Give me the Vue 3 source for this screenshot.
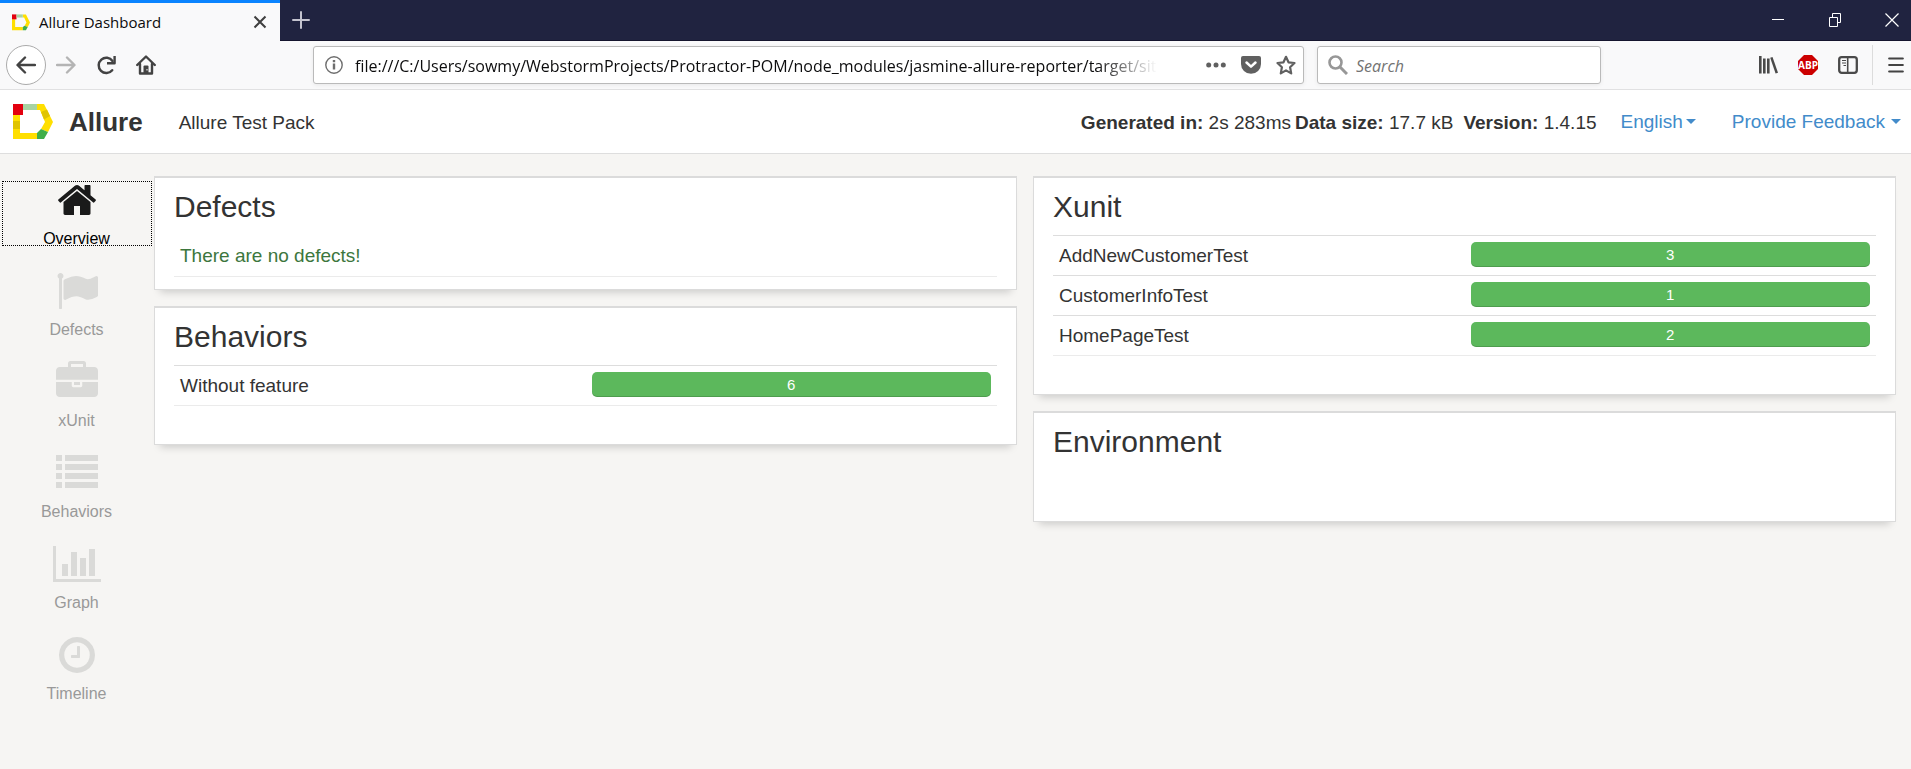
<script setup>
import { ref } from 'vue'

const url = ref('file:///C:/Users/sowmy/WebstormProjects/Protractor-POM/node_modules/jasmine-allure-reporter/target/site')
const query = ref('')

const navItems = [
  {
    label: 'Overview', active: true, width: 1792,
    path: 'M1472 992v480q0 26-19 45t-45 19h-384v-384h-256v384h-384q-26 0-45-19t-19-45v-480q0-1 .5-3t.5-3l575-474 575 474q1 2 1 6zm223-69l-62 74q-8 9-21 11h-3q-13 0-21-7l-692-577-692 577q-12 8-24 7-13-2-21-11l-62-74q-8-10-7-23.5t11-21.5l719-599q32-26 76-26t76 26l244 204v-195q0-14 9-23t23-9h192q14 0 23 9t9 23v408l219 182q10 8 11 21.5t-7 23.5z'
  },
  {
    label: 'Defects', width: 1792,
    path: 'M320 256q0 72-64 110v1266q0 13-9.5 22.5t-22.5 9.5h-64q-13 0-22.5-9.5t-9.5-22.5v-1266q-64-38-64-110 0-53 37.5-90.5t90.5-37.5 90.5 37.5 37.5 90.5zm1472 64v763q0 25-12.5 38.5t-39.5 27.5q-215 116-369 116-61 0-123.5-22t-108.5-48-115.5-48-142.5-22q-192 0-464 146-17 9-33 9-26 0-45-19t-19-45v-742q0-32 31-55 21-14 79-43 236-120 421-120 107 0 200 29t219 88q38 19 88 19 54 0 117.5-21t110-47 88-47 54.5-21q26 0 45 19t19 45z'
  },
  {
    label: 'xUnit', width: 1792,
    path: 'M640 256h512v-128h-512v128zm1152 640v480q0 66-47 113t-113 47h-1472q-66 0-113-47t-47-113v-480h672v160q0 26 19 45t45 19h320q26 0 45-19t19-45v-160h672zm-768 0v128h-256v-128h256zm768-480v384h-1792v-384q0-66 47-113t113-47h352v-160q0-40 28-68t68-28h576q40 0 68 28t28 68v160h352q66 0 113 47t47 113z'
  },
  {
    label: 'Behaviors', width: 1792,
    path: 'M0 128h256v256h-256zM384 128h1408v256h-1408zM0 512h256v256h-256zM384 512h1408v256h-1408zM0 896h256v256h-256zM384 896h1408v256h-1408zM0 1280h256v256h-256zM384 1280h1408v256h-1408z'
  },
  {
    label: 'Graph', width: 2048,
    path: 'M640 896v512h-256v-512h256zm384-512v1024h-256v-1024h256zm1024 1152v128h-2048v-1536h128v1408h1920zm-640-896v768h-256v-768h256zm384-384v1152h-256v-1152h256z'
  },
  {
    label: 'Timeline', width: 1792,
    path: 'M1024 544v448q0 14-9 23t-23 9h-320q-14 0-23-9t-9-23v-64q0-14 9-23t23-9h224v-352q0-14 9-23t23-9h64q14 0 23 9t9 23zm416 352q0-148-73-273t-198-198-273-73-273 73-198 198-73 273 73 273 198 198 273 73 273-73 198-198 73-273zm224 0q0 209-103 385.5t-279.5 279.5-385.5 103-385.5-103-279.5-279.5-103-385.5 103-385.5 279.5-279.5 385.5-103 385.5 103 279.5 279.5 103 385.5z'
  }
]

const columns = [
  [
    { title: 'Defects', message: 'There are no defects!' },
    { title: 'Behaviors', rows: [{ name: 'Without feature', passed: 6 }] }
  ],
  [
    {
      title: 'Xunit',
      rows: [
        { name: 'AddNewCustomerTest', passed: 3 },
        { name: 'CustomerInfoTest', passed: 1 },
        { name: 'HomePageTest', passed: 2 }
      ]
    },
    { title: 'Environment', empty: true }
  ]
]
</script>

<template>
  <div class="window">
    <div class="titlebar">
      <div class="tab">
        <svg class="favicon" viewBox="0 0 40 36" aria-hidden="true">
          <path d="M24 0H31L40 18L35 28L28 25L32 18L27 7H24z" fill="#ffdf00" />
          <path d="M0 11H7V28H24V35H0z" fill="#ffdf00" />
          <path d="M0 0H10V11H0z" fill="#e3000f" />
          <path d="M10 0H24V7H10z" fill="#a8d3a2" />
          <path d="M24 28L28 25L35 28L31 35H24z" fill="#3fae49" />
        </svg>
        <span class="tab-title">Allure Dashboard</span>
        <button class="icon-btn" aria-label="Close tab">
          <svg width="14" height="14" viewBox="0 0 14 14" fill="none" stroke="#3f3f3f" stroke-width="2"><path d="M1.5 1.5l11 11M12.500 1.500l-11 11" /></svg>
        </button>
      </div>
      <button class="icon-btn new-tab" aria-label="New tab">
        <svg width="18" height="18" viewBox="0 0 18 18" fill="none" stroke="#c4c4cf" stroke-width="2" stroke-linecap="round"><path d="M9 1v16M1 9h16" /></svg>
      </button>
      <div class="window-controls">
        <button class="icon-btn" aria-label="Minimize">
          <svg width="14" height="14" viewBox="0 0 14 14" fill="none" stroke="#fff"><path d="M1 6.500h12" /></svg>
        </button>
        <button class="icon-btn" aria-label="Restore">
          <svg width="14" height="14" viewBox="0 0 14 14" fill="none" stroke="#fff"><path d="M1.500 4.500h8v9h-8zM4.500 4v-3.500h8v9h-3" /></svg>
        </button>
        <button class="icon-btn" aria-label="Close">
          <svg width="14" height="14" viewBox="0 0 14 14" fill="none" stroke="#fff" stroke-width="1.200"><path d="M.5 .5l13 13M13.500 .5l-13 13" /></svg>
        </button>
      </div>
    </div>

    <div class="toolbar">
      <button class="icon-btn back" aria-label="Back">
        <svg width="20" height="20" viewBox="0 0 20 20" fill="none" stroke="#434343" stroke-width="2.400" stroke-linecap="round" stroke-linejoin="round"><path d="M19 10H2M9 2.500L1.500 10L9 17.500" /></svg>
      </button>
      <div class="tools">
        <button class="icon-btn" aria-label="Forward">
          <svg width="20" height="20" viewBox="0 0 20 20" fill="none" stroke="#b4b4b4" stroke-width="2.400" stroke-linecap="round" stroke-linejoin="round"><path d="M1 10h17M11 2.500L18.500 10L11 17.500" /></svg>
        </button>
        <button class="icon-btn" aria-label="Reload">
          <svg width="20" height="20" viewBox="0 0 20 20"><path d="M16.200 15.200A7.600 7.600 0 1 1 16.500 6" fill="none" stroke="#434343" stroke-width="2.500" stroke-linecap="round" /><path d="M18.600 1v7.300h-7.600" fill="none" stroke="#434343" stroke-width="2.400" stroke-linejoin="round" /></svg>
        </button>
        <button class="icon-btn" aria-label="Home">
          <svg width="20" height="20" viewBox="0 0 20 20"><path d="M1.200 10L10 1.500L18.800 10M4 9v9.500h12V9" fill="none" stroke="#434343" stroke-width="2.400" stroke-linecap="round" stroke-linejoin="round" /><path d="M7.500 18.500v-7q0-1 1-1h3q1 0 1 1v7z" fill="#434343" /><path d="M10.500 14h1v1.500h-1z" fill="#fff" /></svg>
        </button>
      </div>

      <div class="field url-field">
        <svg width="18" height="18" viewBox="0 0 18 18" aria-hidden="true"><circle cx="9" cy="9" r="8.200" fill="none" stroke="#6e6e6e" stroke-width="1.400" /><path d="M7.800 7.500h2.400v6h-2.400zM7.800 4h2.400v2.200h-2.400z" fill="#6e6e6e" /></svg>
        <input v-model="url" class="url-input" type="text" aria-label="Address">
        <div class="url-actions">
          <button class="icon-btn" aria-label="Page actions">
            <svg width="20" height="20" viewBox="0 0 20 20" fill="#606060"><circle cx="2.700" cy="10" r="2.500" /><circle cx="10" cy="10" r="2.500" /><circle cx="17.300" cy="10" r="2.500" /></svg>
          </button>
          <button class="icon-btn" aria-label="Save to Pocket">
            <svg width="20" height="20" viewBox="0 0 20 20"><path d="M2 1h16q2 0 2 2v6a10 9.800 0 0 1-20 0v-6q0-2 2-2z" fill="#606060" /><path d="M5.500 7.500l4.500 4.200 4.500-4.200" fill="none" stroke="#fff" stroke-width="2.500" stroke-linecap="round" stroke-linejoin="round" /></svg>
          </button>
          <button class="icon-btn" aria-label="Bookmark">
            <svg width="20" height="20" viewBox="0 0 20 20"><path d="M10 1.800l2.500 5.500 6 .7-4.400 4.200 1.100 6.200-5.200-3-5.200 3 1.100-6.200-4.400-4.200 6-.7z" fill="none" stroke="#606060" stroke-width="2.200" stroke-linejoin="round" /></svg>
          </button>
        </div>
      </div>

      <div class="field search-field">
        <svg width="20" height="20" viewBox="0 0 20 20" fill="none" stroke="#979797" aria-hidden="true"><circle cx="7.500" cy="7.500" r="6" stroke-width="2.600" /><path d="M12 12l7 7" stroke-width="3" /></svg>
        <input v-model="query" class="search-input" type="text" placeholder="Search" aria-label="Search">
      </div>

      <div class="extras">
        <button class="icon-btn" aria-label="Library">
          <svg width="20" height="20" viewBox="0 0 20 20" fill="#4a4a4a"><path d="M1 1h2.600v17.500H1zM5 3.500h2.600v15H5zM9 3.500h2.600v15H9z" /><path d="M12.200 2.800l2.300-.8 5.500 15.700-2.400.8z" /></svg>
        </button>
        <button class="icon-btn" aria-label="Adblock Plus">
          <svg width="20" height="20" viewBox="0 0 20 20"><path d="M6 0h8l6 6v8l-6 6h-8l-6-6v-8z" fill="#cc0000" /><text x="10" y="14" text-anchor="middle" class="abp">ABP</text></svg>
        </button>
        <button class="icon-btn" aria-label="Sidebars">
          <svg width="20" height="20" viewBox="0 0 20 20" fill="none" stroke="#4a4a4a"><rect x="1.200" y="2.200" width="17.600" height="15.600" rx="2.500" stroke-width="2.300" /><path d="M9.700 2v15" stroke-width="1.600" /><path d="M4 5.500h4M4 8h4M5.500 10.500h2.500" stroke-width="1.200" /></svg>
        </button>
      </div>
      <button class="icon-btn menu" aria-label="Open menu">
        <svg width="16" height="16" viewBox="0 0 16 16" fill="none" stroke="#434343" stroke-width="2.200" stroke-linecap="round"><path d="M1.200 1.500h13.600M1.200 8h13.600M1.200 14.500h13.600" /></svg>
      </button>
    </div>

    <header class="header">
      <svg class="logo" viewBox="0 0 40 36" aria-hidden="true">
        <path d="M24 0H31L40 18L35 28L28 25L32 18L27 6H24z" fill="#ffdf00" />
        <path d="M0 11H7V29H24V35H0z" fill="#ffdf00" />
        <path d="M0 0H10V11H0z" fill="#e3000f" />
        <path d="M10 0H24V6H10z" fill="#a8d3a2" />
        <path d="M28 8L34 5.500L37 12L31 15.500z" fill="#e0c400" />
        <path d="M0 17H7V25H0z" fill="#e0c400" />
        <path d="M24 29L28 25L35 28L31 35H24z" fill="#3fae49" />
      </svg>
      <h1 class="brand">Allure</h1>
      <span class="pack">Allure Test Pack</span>
      <div class="meta">
        <span><b>Generated in:</b> 2s 283ms</span>
        <span><b>Data size:</b> 17.7 kB</span>
        <span class="version"><b>Version:</b> 1.4.15</span>
      </div>
      <a class="drop" href="#">English<i class="caret"></i></a>
      <a class="drop feedback" href="#">Provide Feedback<i class="caret spaced"></i></a>
    </header>

    <div class="body">
      <nav class="nav">
        <a v-for="item in navItems" :key="item.label" href="#" class="nav-item" :class="{ active: item.active }">
          <svg class="nav-icon" :viewBox="`0 0 ${item.width} 1792`" aria-hidden="true"><path :d="item.path" /></svg>
          <span>{{ item.label }}</span>
        </a>
      </nav>
      <main class="board">
        <div v-for="(cards, i) in columns" :key="i" class="column">
          <section v-for="card in cards" :key="card.title" class="card" :class="{ bare: card.empty, note: card.message }">
            <h2>{{ card.title }}</h2>
            <p v-if="card.message" class="message">{{ card.message }}</p>
            <table v-if="card.rows">
              <tbody>
                <tr v-for="row in card.rows" :key="row.name">
                  <td>{{ row.name }}</td>
                  <td><div class="bar">{{ row.passed }}</div></td>
                </tr>
              </tbody>
            </table>
          </section>
        </div>
      </main>
    </div>
  </div>
</template>

<style>
body {
  margin: 0;
  background: #f6f5f3;
}
</style>

<style scoped>
* {
  box-sizing: border-box;
}
.window {
  min-height: 100vh;
  background: #f6f5f3;
  color: #333;
  font: 19px/28px "Liberation Sans", Arial, sans-serif;
}
.icon-btn {
  display: flex;
  align-items: center;
  justify-content: center;
  padding: 0;
  border: 0;
  background: none;
}
svg {
  display: block;
  flex: none;
}

.titlebar {
  display: flex;
  height: 41px;
  background: #202340;
  border-bottom: 1px solid #15152e;
}
.tab {
  display: flex;
  align-items: center;
  width: 280px;
  height: 41px;
  padding: 0 13px 0 12px;
  border-top: 3px solid #0a84ff;
  background: #f9f9fa;
  color: #0c0c0d;
  font: 15px/20px "Open Sans", "Noto Sans", sans-serif;
}
.favicon {
  width: 18px;
  height: 17px;
}
.tab-title {
  flex: 1;
  margin-left: 9px;
}
.new-tab {
  width: 42px;
}
.window-controls {
  display: flex;
  gap: 43px;
  margin-left: auto;
  padding-right: 12px;
}

.toolbar {
  display: flex;
  align-items: center;
  height: 49px;
  padding: 0 7px 0 6px;
  border-bottom: 1px solid #e1e1e2;
  background: #f9f9fa;
}
.back {
  width: 40px;
  height: 40px;
  border: 1px solid #ababab;
  border-radius: 50%;
  background: #fff;
}
.tools {
  display: flex;
  gap: 20px;
  margin: 0 157px 0 10px;
}
.field {
  display: flex;
  align-items: center;
  height: 38px;
  border: 1px solid #bababa;
  border-radius: 3px;
  background: #fff;
  box-shadow: 0 1px 4px rgba(0, 0, 0, .07);
}
.field input {
  flex: 1;
  min-width: 0;
  height: 32px;
  padding: 2px 0 0;
  border: 0;
  outline: 0;
  background: none;
  color: #0c0c0d;
  font: 16px/24px "Open Sans", "Noto Sans", sans-serif;
}
.url-field {
  flex: 1;
  min-width: 0;
  padding: 0 7px 0 11px;
}
.url-field .url-input {
  margin: 0 49px 0 12px;
  mask-image: linear-gradient(to left, transparent, #000 60px);
}
.url-actions {
  display: flex;
  gap: 15px;
}
.search-field {
  width: 284px;
  margin-left: 13px;
  padding: 0 10px;
}
.field .search-input {
  margin-left: 8px;
}
.search-input::placeholder {
  color: #737373;
  font-style: italic;
  opacity: 1;
}
.extras {
  display: flex;
  gap: 20px;
  margin-left: 157px;
}
.abp {
  fill: #fff;
  font: bold 10px "Open Sans", sans-serif;
}
.menu {
  height: 40px;
  margin-left: 14px;
  padding-left: 15px;
  border-left: 1px solid #dcdcdc;
}

.header {
  display: flex;
  align-items: center;
  height: 64px;
  padding: 0 10px 0 13px;
  border-bottom: 1px solid #dedede;
  background: #fff;
}
.logo {
  width: 40px;
  height: 36px;
}
.brand {
  margin: 0 36px 0 16px;
  font-size: 26px;
  line-height: 32px;
}
.pack,
.meta {
  padding-top: 2px;
}
.meta {
  display: flex;
  gap: 4px;
  margin-left: auto;
}
.version {
  margin-left: 6px;
}
.drop {
  display: flex;
  align-items: center;
  margin-left: 24px;
  color: #428bca;
  text-decoration: none;
}
.feedback {
  margin-left: 36px;
}
.caret {
  margin-left: 3px;
  border: 5px solid transparent;
  border-top-color: #428bca;
  border-bottom: 0;
}
.caret.spaced {
  margin-left: 6px;
}

.body {
  display: flex;
}
.nav {
  flex: none;
  width: 154px;
  padding: 25px 1px 0 0;
}
.nav-item {
  position: relative;
  display: flex;
  flex-direction: column;
  align-items: center;
  gap: 7px;
  height: 91px;
  color: #999;
  font-size: 16px;
  line-height: 22px;
  text-decoration: none;
}
.nav-icon {
  height: 42px;
  fill: #dadad8;
}
.active {
  color: #000;
}
.active .nav-icon {
  fill: #1a1a1a;
}
.active::after {
  content: "";
  position: absolute;
  inset: 2px 1px 24px 2px;
  border: 1px dotted #000;
}

.board {
  flex: 1;
  display: grid;
  grid-template-columns: 1fr 1fr;
  align-items: start;
  gap: 16px;
  padding: 22px 15px 0 0;
}
.column {
  display: grid;
  gap: 16px;
}
.card {
  padding: 11px 19px 38px;
  border: 1px solid #dbdbdb;
  border-top-width: 2px;
  background: #fff;
  box-shadow: 0 8px 8px -6px rgba(0, 0, 0, .18);
}
.note {
  padding-bottom: 12px;
}
.bare {
  padding-bottom: 51px;
}
.card h2 {
  margin: 0 0 10px;
  font-size: 30px;
  font-weight: 400;
  line-height: 36px;
}
.message {
  height: 42px;
  margin: 0;
  padding: 7px 6px;
  border-bottom: 1px solid #ebebeb;
  color: #3c763d;
}
table {
  width: 100%;
  table-layout: fixed;
  border-collapse: collapse;
  border-bottom: 1px solid #ebebeb;
}
td {
  height: 40px;
  padding: 6px;
  border-top: 1px solid #ddd;
  line-height: 27px;
  vertical-align: top;
}
.bar {
  height: 25px;
  border-radius: 5px;
  background: #5cb85c;
  box-shadow: inset 0 -1px 0 rgba(0, 0, 0, .15);
  color: #fff;
  font-size: 15px;
  line-height: 25px;
  text-align: center;
}
</style>
